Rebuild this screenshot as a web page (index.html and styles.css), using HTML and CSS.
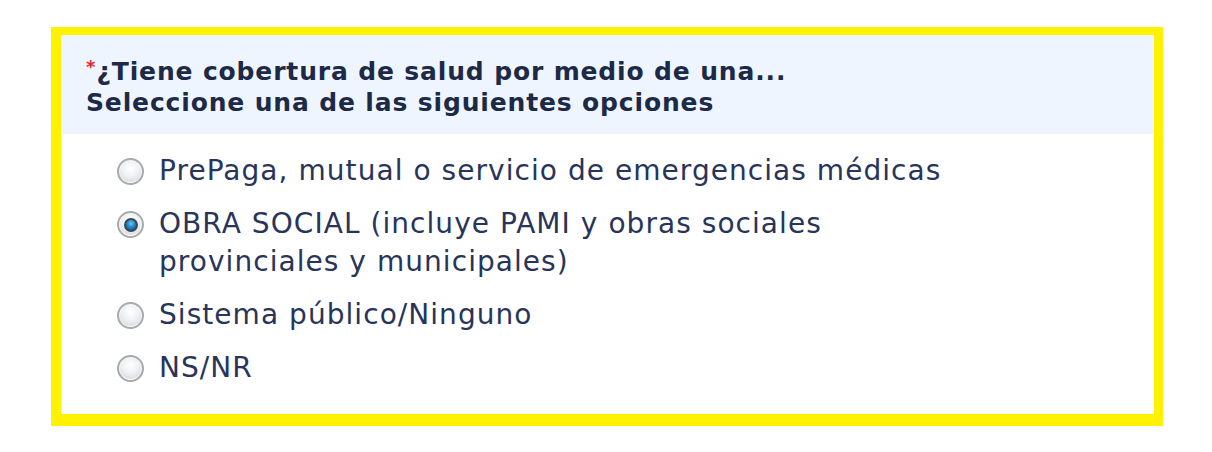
FILE: index.html
```html
<!DOCTYPE html>
<html lang="es">
<head>
<meta charset="utf-8">
<title>Cobertura de salud</title>
<link rel="stylesheet" href="styles.css">
</head>
<body>
<div class="question">
  <div class="q-header">
    <div class="q-line"><span class="req">*</span>¿Tiene cobertura de salud por medio de una...</div>
    <div class="q-line">Seleccione una de las siguientes opciones</div>
  </div>
  <ul class="options">
    <li class="option"><span class="radio"></span><span class="label">PrePaga, mutual o servicio de emergencias médicas</span></li>
    <li class="option"><span class="radio checked"></span><span class="label">OBRA SOCIAL (incluye PAMI y obras sociales provinciales y municipales)</span></li>
    <li class="option"><span class="radio"></span><span class="label">Sistema público/Ninguno</span></li>
    <li class="option"><span class="radio"></span><span class="label">NS/NR</span></li>
  </ul>
</div>
</body>
</html>
```
FILE: styles.css
```css
html, body {
  margin: 0;
  padding: 0;
  background: #ffffff;
}
body {
  padding: 27px 0 0 51px;
  font-family: "DejaVu Sans", Verdana, sans-serif;
}
.question {
  width: 1093px;
  border-style: solid;
  border-color: #fff200;
  border-width: 8px 9px 12px 10px;
  box-shadow: 0 1px 0 #cfd3d6;
  background: #ffffff;
}
.q-header {
  background: #eef5fe;
  padding: 21px 20px 16px 25px;
  color: #1d2a47;
  font-weight: bold;
  font-size: 25px;
  letter-spacing: 0.85px;
  line-height: 31px;
}
.req {
  color: #e8262b;
  font-size: 18px;
  line-height: 0;
  vertical-align: 7px;
  margin-right: 1px;
  letter-spacing: 0;
}
.options {
  list-style: none;
  margin: 0;
  padding: 18px 0 27px 56px;
  display: flex;
  flex-direction: column;
  gap: 15px;
}
.option {
  display: flex;
  align-items: flex-start;
  gap: 15px;
  font-size: 28px;
  letter-spacing: 1.05px;
  line-height: 38px;
  color: #28345a;
}
.label {
  max-width: 810px;
}
.radio {
  flex: none;
  width: 27px;
  height: 27px;
  margin-top: 6px;
  box-sizing: border-box;
  border-radius: 50%;
  border: 2px solid #a8abae;
  background: radial-gradient(circle at 50% 35%, #ffffff 0%, #eef0f2 45%, #c9ced4 100%);
  box-shadow: inset 0 0 0 1px #f4f5f6;
  position: relative;
}
.radio.checked::after {
  content: "";
  position: absolute;
  left: 50%;
  top: 50%;
  width: 14px;
  height: 14px;
  margin: -7px 0 0 -7px;
  box-sizing: border-box;
  border-radius: 50%;
  border: 2px solid #3c4754;
  background: radial-gradient(circle at 50% 35%, #6cc3f0 0%, #1b84c8 50%, #0b4a7e 100%);
}
```
